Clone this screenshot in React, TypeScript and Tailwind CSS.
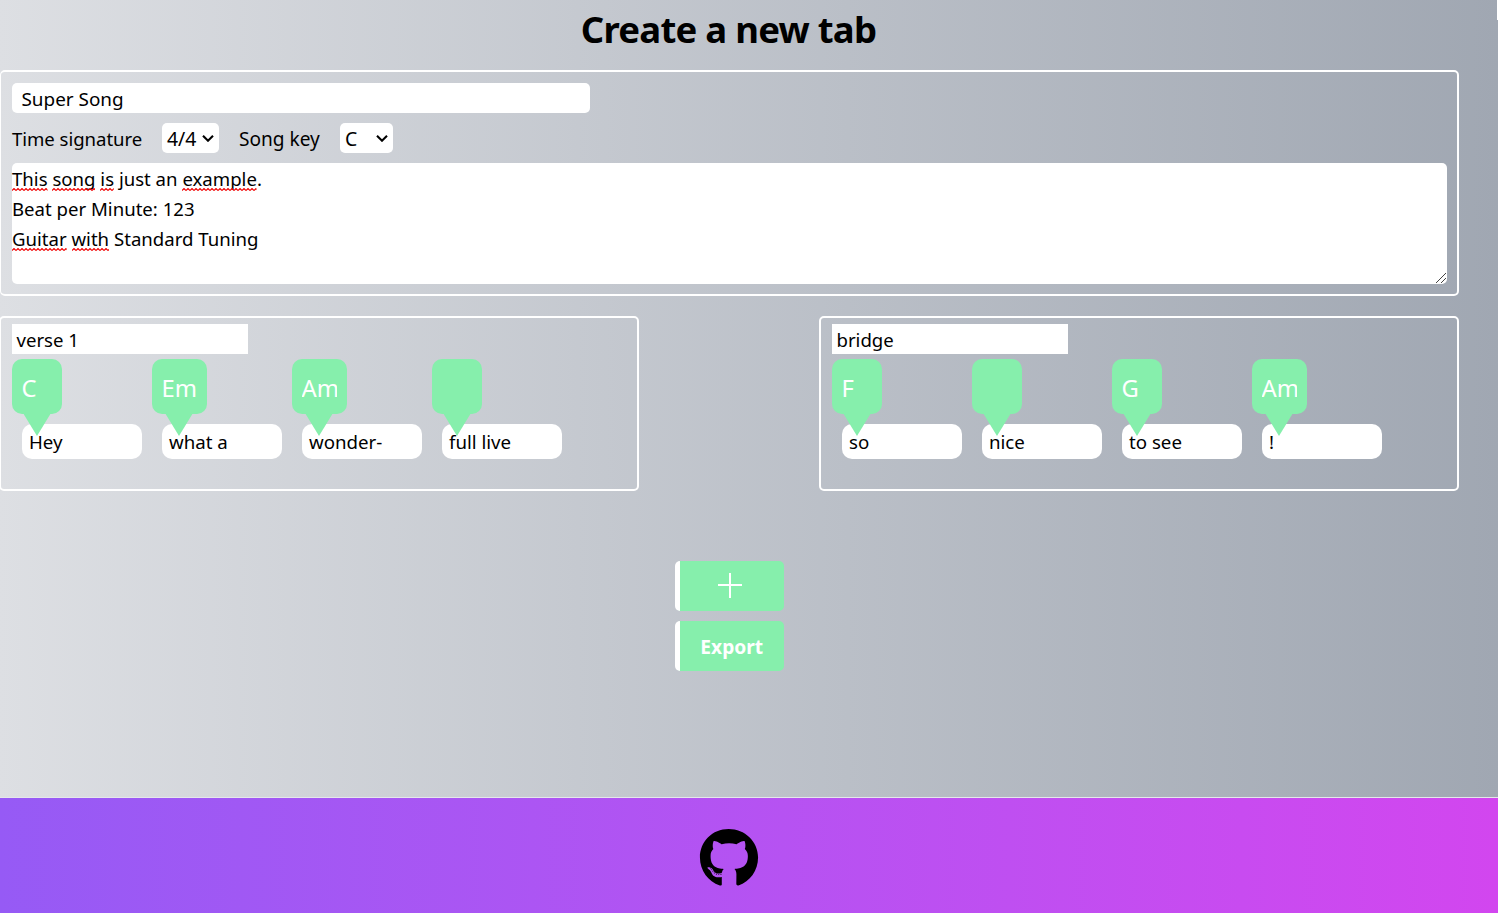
import React from "react";
import { FaGithub } from "react-icons/fa";

type Cell = { chord: string; lyric: string };

const verse: Cell[] = [
  { chord: "C", lyric: "Hey" },
  { chord: "Em", lyric: "what a" },
  { chord: "Am", lyric: "wonder-" },
  { chord: "", lyric: "full live" },
];

const bridge: Cell[] = [
  { chord: "F", lyric: "so" },
  { chord: "", lyric: "nice" },
  { chord: "G", lyric: "to see" },
  { chord: "Am", lyric: "!" },
];

function Chord({ chord, lyric }: Cell) {
  const wide = chord.length > 1;
  return (
    <div className="w-[140px] shrink-0">
      <div className={"relative h-[55px] rounded-[10px] bg-[#86efac] " + (wide ? "w-[55px]" : "w-[50px]")}>
        <div className="mr-[10px] ml-[9.5px] overflow-hidden whitespace-nowrap pt-[11px] text-[23.8px] leading-[36px] text-white">{chord}</div>
        <svg className={"absolute top-[54px] " + (wide ? "left-[13px]" : "left-[11px]")} width="28" height="23" viewBox="0 0 28 23">
          <path d="M0 0H28L14 23Z" fill="#86efac" />
        </svg>
      </div>
      <div className="mt-[10px] ml-[10px] h-[35px] w-[120px] rounded-[10px] bg-white pl-[7px] text-[18.7px] leading-[35px]">{lyric}</div>
    </div>
  );
}

function Section({ name, cells }: { name: string; cells: Cell[] }) {
  return (
    <section className="h-[175px] w-[640px] rounded-[5px] border-2 border-white px-[11px] pt-[6px]">
      <div className="h-[30px] w-[236px] bg-white pl-[4.5px] text-[18.6px] leading-[31px]">{name}</div>
      <div className="mt-[5px] flex">
        {cells.map((c, i) => (
          <Chord key={i} chord={c.chord} lyric={c.lyric} />
        ))}
      </div>
    </section>
  );
}

function Misspelt({ children }: { children: string }) {
  return (
    <span className="relative inline-block">
      {children}
      <svg className="absolute bottom-[3px] left-0 h-[3px] w-full" aria-hidden="true">
        <defs>
          <pattern id="wave" width="4" height="3" patternUnits="userSpaceOnUse">
            <path d="M0 2.5L2 .5L4 2.5" fill="none" stroke="#f00000" strokeWidth="1.1" />
          </pattern>
        </defs>
        <rect width="100%" height="3" fill="url(#wave)" />
      </svg>
    </span>
  );
}

function Select({ value, className }: { value: string; className: string }) {
  return (
    <div className={"flex h-[30px] items-center justify-between rounded-[5px] bg-white pr-[5px] pl-[5px] " + className}>
      <span className="pt-[2px] text-[19.4px] leading-[30px]">{value}</span>
      <svg width="12" height="8" viewBox="0 0 12 8">
        <path d="M1 1.7L6 6.7L11 1.7" fill="none" stroke="#000" strokeWidth="2.1" />
      </svg>
    </div>
  );
}

export default function App() {
  return (
    <div className="flex h-[913px] w-[1498px] flex-col overflow-hidden bg-linear-to-r from-[#dddfe3] to-[#a0a7b2] font-['Noto_Sans',sans-serif] text-[18.6px] text-black">
      <div className="flex">
        <h1 className="h-[70px] w-[1457px] text-center text-[36.5px] leading-[58px] font-bold tracking-[-0.75px]">Create a new tab</h1>
        <div className="ml-auto h-5 w-px bg-white" />
      </div>
      <main className="h-[727px] w-[1459px]">
        <section className="h-[226px] rounded-[5px] border-2 border-l-[1px] border-white px-[11px] pt-[11px] pr-[10px]">
          <div className="h-[30px] w-[578px] rounded-[5px] bg-white pl-[9.5px] text-[18.9px] leading-[32px]">Super Song</div>
          <div className="mt-[10px] flex h-[30px] items-center leading-[30px]">
            <span className="w-[150px] pt-[2px] tracking-[-0.05px]">Time signature</span>
            <Select value="4/4" className="w-[57px]" />
            <span className="ml-5 w-[101px] pt-[2px] text-[19.1px]">Song key</span>
            <Select value="C" className="w-[53px]" />
          </div>
          <div className="relative mt-[10px] h-[121px] rounded-[5px] bg-white pt-px leading-[30px]">
            <div className="h-[30px]">
              <Misspelt>This</Misspelt> <Misspelt>song</Misspelt> <Misspelt>is</Misspelt> just an <Misspelt>example</Misspelt>.
            </div>
            <div className="h-[30px]">Beat per Minute: 123</div>
            <div className="h-[30px]">
              <Misspelt>Guitar</Misspelt> <Misspelt>with</Misspelt> Standard Tuning
            </div>
            <svg className="absolute right-[1px] bottom-[1px]" width="10" height="10" viewBox="0 0 10 10">
              <path d="M0 10L10 0M5 10L10 5" stroke="#444" strokeWidth="1" />
            </svg>
          </div>
        </section>
        <div className="mt-5 -ml-px flex justify-between">
          <Section name="verse 1" cells={verse} />
          <Section name="bridge" cells={bridge} />
        </div>
        <div className="mt-[70px] ml-[675px] flex w-[108.5px] flex-col gap-[10px] text-white">
          <button className="flex h-[50px] items-start justify-center rounded-[5px] border-l-[5px] border-white bg-[#86efac] pt-[11px] pr-[3px]">
            <svg width="26" height="26" viewBox="0 0 26 26">
              <path d="M1 13H25M13 1V26" stroke="#fff" strokeWidth="2" />
            </svg>
          </button>
          <button className="h-[50px] rounded-[5px] border-l-[5px] border-white bg-[#86efac] text-[19.2px] leading-[52px] font-bold">Export</button>
        </div>
      </main>
      <footer className="h-[116px] border-t border-[#e5e7eb] bg-linear-to-r from-[#965af5] to-[#d246ef]">
        <div className="flex w-[1459px] justify-center pt-[30px]">
          <FaGithub className="-ml-px size-[60px]" />
        </div>
      </footer>
    </div>
  );
}
